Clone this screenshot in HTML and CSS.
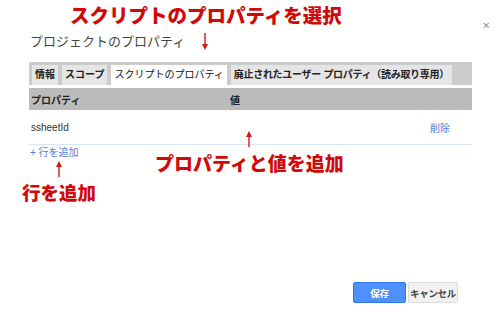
FILE: index.html
```html
<!DOCTYPE html>
<html lang="ja">
<head>
  <meta charset="UTF-8">
  <title>プロジェクトのプロパティ</title>
  <link rel="stylesheet" href="styles.css">
</head>
<body>
  <div class="page">
    <div class="dialog">
      <div class="dialog-title">プロジェクトのプロパティ</div>
      <span class="close">✕</span>

      <!-- tabs -->
      <div class="tabs">
        <div class="tab">情報</div>
        <div class="tab">スコープ</div>
        <div class="tab active">スクリプトのプロパティ</div>
        <div class="tab">廃止されたユーザー プロパティ（読み取り専用）</div>
      </div>

      <!-- property table -->
      <div class="table">
        <div class="row head">
          <div class="cell key">プロパティ</div>
          <div class="cell val">値</div>
        </div>
        <div class="row item">
          <div class="cell key">ssheetId</div>
          <div class="cell val"></div>
          <div class="cell del">削除</div>
        </div>
      </div>
      <div class="add-row">+ 行を追加</div>

      <div class="footer">
        <button class="btn primary">保存</button>
        <button class="btn">キャンセル</button>
      </div>
    </div>

    <!-- red annotations -->
    <div class="note note-tab">スクリプトのプロパティを選択</div>
    <div class="note note-value">プロパティと値を追加</div>
    <div class="note note-add">行を追加</div>

    <svg class="arrow arrow-down" width="10" height="18" viewBox="0 0 10 18">
      <line x1="5" y1="0" x2="5" y2="15" stroke="#d01818" stroke-width="1.4"/>
      <path d="M2 11 L5 17 L8 11 Z" fill="#d01818"/>
    </svg>
    <svg class="arrow arrow-up1" width="10" height="16" viewBox="0 0 10 16">
      <line x1="5" y1="3" x2="5" y2="16" stroke="#d01818" stroke-width="1.4"/>
      <path d="M2 6 L5 0 L8 6 Z" fill="#d01818"/>
    </svg>
    <svg class="arrow arrow-up2" width="10" height="16" viewBox="0 0 10 16">
      <line x1="5" y1="3" x2="5" y2="16" stroke="#d01818" stroke-width="1.4"/>
      <path d="M2 6 L5 0 L8 6 Z" fill="#d01818"/>
    </svg>
  </div>
</body>
</html>
```

FILE: styles.css
```css
body {
  margin: 0;
  background: #fff;
  font-family: Arial, "Noto Sans CJK JP", sans-serif;
}

.page {
  position: relative;
  width: 500px;
  height: 325px;
  overflow: hidden;
}

.dialog {
  display: flex;
  flex-direction: column;
  height: 325px;
  box-sizing: border-box;
  padding: 33px 28px 22px 29px;
}

.dialog-title {
  font-size: 13px;
  line-height: 17px;
  color: #444;
  padding-left: 1px;
}

.close {
  position: absolute;
  top: 20px;
  left: 482px;
  font-size: 10px;
  color: #999;
}

.tabs {
  display: flex;
  gap: 4px;
  margin-top: 12px;
  height: 23px;
  box-sizing: border-box;
  padding: 3px 3px 0;
  background: #cccccc;
}

.tab {
  height: 20px;
  line-height: 20px;
  padding: 0 3px;
  font-size: 10px;
  font-weight: bold;
  color: #222;
  background: #e5e5e5;
  white-space: nowrap;
}

.tab:last-child {
  letter-spacing: -0.3px;
}

.tab.active {
  background: #fff;
  font-weight: normal;
  color: #111;
}

.table {
  margin-top: 3px;
}

.row {
  display: flex;
  align-items: center;
}

.row.head {
  height: 22px;
  background: #bbbbbb;
  font-size: 10px;
  font-weight: bold;
  color: #222;
}

.row.item {
  height: 34px;
  border-bottom: 1px solid #d8e6f5;
  font-size: 10px;
  color: #333;
}

.cell.key {
  width: 199px;
  padding-left: 2px;
}

.cell.val {
  flex: 1;
}

.cell.del {
  padding-right: 22px;
  color: #4a7fd8;
}

.add-row {
  margin-top: 1px;
  font-size: 10px;
  line-height: 14px;
  color: #4a7fd8;
  padding-left: 1px;
}

.footer {
  margin-top: auto;
  display: flex;
  justify-content: flex-end;
  gap: 2px;
  padding-right: 14px;
}

.btn {
  height: 21px;
  padding: 0;
  font-family: inherit;
  font-size: 9.5px;
  font-weight: bold;
  white-space: nowrap;
  letter-spacing: -0.3px;
  border-radius: 2px;
  border: 1px solid #dcdcdc;
  background: #f1f1f1;
  color: #444;
  width: 50px;
}

.btn.primary {
  width: 53px;
  background: #4d90fe;
  border-color: #3079ed;
  color: #fff;
}

.note {
  position: absolute;
  color: #d00a0a;
  font-weight: 900;
  white-space: nowrap;
  line-height: 1;
}

.note-tab {
  left: 70px;
  top: 7px;
  font-size: 19.5px;
}

.note-value {
  left: 155px;
  top: 155px;
  font-size: 19px;
}

.note-add {
  left: 22px;
  top: 185px;
  font-size: 18.5px;
}

.arrow {
  position: absolute;
}

.arrow-down {
  left: 200px;
  top: 33px;
}

.arrow-up1 {
  left: 54px;
  top: 161px;
}

.arrow-up2 {
  left: 244px;
  top: 131px;
}
```
